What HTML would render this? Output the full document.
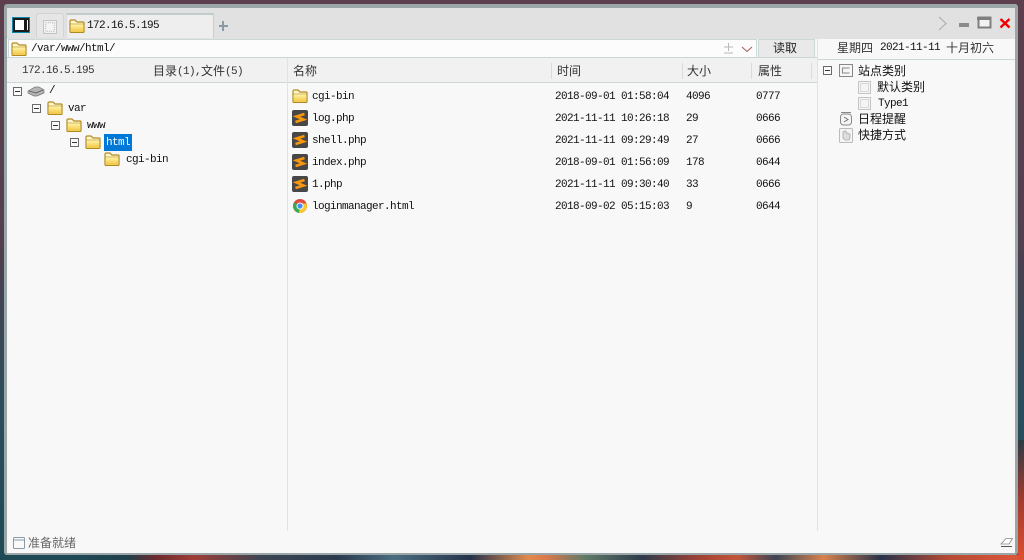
<!DOCTYPE html>
<html><head><meta charset="utf-8">
<style>
html,body{margin:0;padding:0}
body{width:1024px;height:560px;overflow:hidden;position:relative;background:#5d3e4c;font-family:"Liberation Mono","Noto Sans CJK SC",monospace;color:#111}
div,span,svg{position:absolute}
.t{font-size:11px;letter-spacing:-.6px;line-height:14px;white-space:nowrap;color:#111}
.c{font-size:12px;line-height:16px;white-space:nowrap;letter-spacing:0;font-family:"Noto Sans CJK SC","Liberation Sans",sans-serif;color:#333}
.sep{width:1px;background:#d8dcdc;top:63px;height:16px}
</style></head><body>
<svg width="1" height="1" style="left:0;top:0">
<defs>
<linearGradient id="fg" x1="0" y1="0" x2="0" y2="1"><stop offset="0" stop-color="#fff3a8"/><stop offset="1" stop-color="#f2c63e"/></linearGradient>
<symbol id="folder" viewBox="0 0 16 14"><path d="M1 12.500V2.500Q1 1 2.500 1H6L8 3H14Q15 3 15 4V12.500Q15 13.500 14 13.500H2Q1 13.500 1 12.500Z" fill="#fff6cc" stroke="#b08a20" stroke-width="1.200"/><path d="M1.800 5.500H14.200V12.800H1.800Z" fill="url(#fg)"/><path d="M1.500 5H14.500" stroke="#c9a73e" stroke-width=".8"/></symbol>
<symbol id="box" viewBox="0 0 9 9"><rect x=".5" y=".5" width="8" height="8" fill="#fafafa" stroke="#6a6a6a"/><path d="M2 4.500H7" stroke="#333"/></symbol>
<symbol id="sub" viewBox="0 0 16 16"><rect x="0" y="0" width="16" height="16" rx="2" fill="#474747"/><path d="M12.500 4L4.500 6.500L11.500 9.500L3.500 12" fill="none" stroke="#f7960f" stroke-width="2.600"/></symbol>
<symbol id="dash" viewBox="0 0 13 13"><rect x=".5" y=".5" width="12" height="12" fill="#f4f4f4" stroke="#c4c4c4"/><rect x="2.500" y="2.500" width="8" height="8" fill="none" stroke="#bcbcbc" stroke-dasharray="1 1"/></symbol>
</defs></svg>

<div style="left:0;top:0;width:1024px;height:300px;background:linear-gradient(#5d3e4c,#50404f)"></div>
<div style="left:0;top:250px;width:1024px;height:310px;background:linear-gradient(#4d3f4e,#2b4e5c 50%,#1f4a55)"></div>
<div style="left:70px;top:555px;width:954px;height:5px;background:linear-gradient(90deg,#1e4a55 0,#20404c 6%,#6d2a2e 9%,#a03c38 13%,#3c4653 20%,#2a3a4e 28%,#4b6c80 34%,#26334a 42%,#e08a4e 48%,#d9794a 50%,#5f7a68 54%,#2e3a4a 60%,#a24234 66%,#c2563a 70%,#3d4555 74%,#d9824c 79%,#28324a 85%,#b54a34 92%,#e0583a 100%)"></div>
<div style="left:1018px;top:440px;width:6px;height:120px;background:linear-gradient(#2e3a45,#a03c30 50%,#dd5030)"></div>

<!-- window -->
<div style="left:4px;top:4px;width:1014px;height:551px;background:#9aa5a8;border-radius:3px"></div>
<div style="left:7px;top:8px;width:1008px;height:545px;background:#f8f8f8"></div>
<div style="left:7px;top:8px;width:1008px;height:31px;background:#e1e1e1"></div>

<!-- sidebar button -->
<div style="left:12px;top:17px;width:18px;height:16px;background:#0a8aa8"></div>
<div style="left:13px;top:18px;width:16px;height:14px;background:#1b1b1b"></div>
<div style="left:15px;top:20px;width:9px;height:10px;background:#fff"></div>
<div style="left:27px;top:20px;width:1px;height:10px;background:#fff"></div>

<!-- inactive tab -->
<div style="left:36px;top:13px;width:26px;height:23px;background:#e6e6e6;border:1px solid #d0d4d4;border-bottom:0;border-radius:3px 3px 0 0"></div>
<svg style="left:43px;top:20px" width="14" height="14"><use href="#dash" width="14" height="14"/></svg>
<!-- active tab -->
<div style="left:66px;top:13px;width:146px;height:23px;background:#eeeeee;border-top:2px solid #c0cccc;border-right:1px solid #c8d0d0;border-left:1px solid #dcdcdc"></div>
<svg style="left:69px;top:19px" width="16" height="14"><use href="#folder" width="16" height="14"/></svg>
<div class="t" style="left:87px;top:19px">172.16.5.195</div>
<div style="left:219px;top:25px;width:9px;height:2px;background:#8a9aa4"></div>
<div style="left:222px;top:21px;width:2px;height:10px;background:#8a9aa4"></div>

<!-- window controls -->
<svg style="left:936px;top:15px" width="80" height="18">
<path d="M3 2L10 8.500L3 15" fill="none" stroke="#aaa"/>
<rect x="23" y="8" width="10" height="4" fill="#8c8c8c"/>
<rect x="42.500" y="2.500" width="12" height="10" fill="#f2f2f2" stroke="#7f7f7f" stroke-width="2"/>
<rect x="41" y="2" width="14" height="3" fill="#7f7f7f"/>
<path d="M64.500 4L73.500 12.500M73.500 4L64.500 12.500" stroke="#f00000" stroke-width="2.400"/>
</svg>

<!-- address -->
<div style="left:8px;top:39px;width:747px;height:17px;background:#fcfcfc;border:1px solid #cdd8d8"></div>
<svg style="left:11px;top:42px" width="16" height="14"><use href="#folder" width="16" height="14"/></svg>
<div class="t" style="left:31px;top:42px">/var/www/html/</div>
<svg style="left:722px;top:42px" width="32" height="14">
<path d="M2 5H11M6.500 1V9M2 11H11" stroke="#b8b8b8" fill="none"/>
<path d="M20 5L25 9.500L30 5" stroke="#a55" fill="none"/>
</svg>
<div style="left:758px;top:39px;width:55px;height:17px;background:#e9e9e9;border:1px solid #cdd8d8"></div>
<div class="c" style="left:773px;top:40px;color:#222">读取</div>
<div class="c" style="left:837px;top:40px">星期四</div>
<div class="t" style="left:880px;top:41px">2021-11-11</div>
<div class="c" style="left:946px;top:40px">十月初六</div>

<!-- dividers -->
<div style="left:817px;top:39px;width:1px;height:492px;background:#dfe3e3"></div>
<div style="left:818px;top:59px;width:197px;height:1px;background:#cdd6d6"></div>
<div style="left:7px;top:57px;width:810px;height:1px;background:#cdd6d6"></div>
<div style="left:7px;top:58px;width:810px;height:24px;background:#f1f1f1"></div>
<div style="left:7px;top:82px;width:810px;height:1px;background:#cfd6d6"></div>
<div style="left:287px;top:58px;width:1px;height:473px;background:#dfe3e3"></div>
<div class="sep" style="left:551px"></div>
<div class="sep" style="left:682px"></div>
<div class="sep" style="left:751px"></div>
<div class="sep" style="left:811px"></div>

<!-- left header -->
<div class="t" style="left:22px;top:64px;color:#333">172.16.5.195</div>
<div class="c" style="left:153px;top:63px">目录</div>
<div class="t" style="left:177px;top:65px;color:#333">(1),</div>
<div class="c" style="left:201px;top:63px">文件</div>
<div class="t" style="left:225px;top:65px;color:#333">(5)</div>

<!-- column headers -->
<div class="c" style="left:293px;top:63px">名称</div>
<div class="c" style="left:557px;top:63px">时间</div>
<div class="c" style="left:687px;top:63px">大小</div>
<div class="c" style="left:758px;top:63px">属性</div>

<!-- tree -->
<svg style="left:13px;top:87px" width="9" height="9"><use href="#box" width="9" height="9"/></svg>
<svg style="left:27px;top:85px" width="18" height="12"><path d="M1 6L8 2H12L17 5V8L10 11H7L1 8Z" fill="#b4b4b4" stroke="#777" stroke-width=".7"/><path d="M2 6L9 8L16 5" stroke="#555" fill="none" stroke-width=".8"/></svg>
<div class="t" style="left:49px;top:84px">/</div>
<svg style="left:32px;top:104px" width="9" height="9"><use href="#box" width="9" height="9"/></svg>
<svg style="left:47px;top:101px" width="16" height="14"><use href="#folder" width="16" height="14"/></svg>
<div class="t" style="left:68px;top:102px">var</div>
<svg style="left:51px;top:121px" width="9" height="9"><use href="#box" width="9" height="9"/></svg>
<svg style="left:66px;top:118px" width="16" height="14"><use href="#folder" width="16" height="14"/></svg>
<div class="t" style="left:87px;top:119px">www</div>
<svg style="left:70px;top:138px" width="9" height="9"><use href="#box" width="9" height="9"/></svg>
<svg style="left:85px;top:135px" width="16" height="14"><use href="#folder" width="16" height="14"/></svg>
<div style="left:104px;top:134px;width:28px;height:17px;background:#0078d7"></div>
<div class="t" style="left:106px;top:136px;color:#fff">html</div>
<svg style="left:104px;top:152px" width="16" height="14"><use href="#folder" width="16" height="14"/></svg>
<div class="t" style="left:126px;top:153px">cgi-bin</div>

<!-- files -->
<svg style="left:292px;top:89px" width="16" height="14"><use href="#folder" width="16" height="14"/></svg>
<div class="t" style="left:312px;top:90px">cgi-bin</div>
<div class="t" style="left:555px;top:90px">2018-09-01 01:58:04</div>
<div class="t" style="left:686px;top:90px">4096</div>
<div class="t" style="left:756px;top:90px">0777</div>

<svg style="left:292px;top:110px" width="16" height="16"><use href="#sub" width="16" height="16"/></svg>
<div class="t" style="left:312px;top:112px">log.php</div>
<div class="t" style="left:555px;top:112px">2021-11-11 10:26:18</div>
<div class="t" style="left:686px;top:112px">29</div>
<div class="t" style="left:756px;top:112px">0666</div>

<svg style="left:292px;top:132px" width="16" height="16"><use href="#sub" width="16" height="16"/></svg>
<div class="t" style="left:312px;top:134px">shell.php</div>
<div class="t" style="left:555px;top:134px">2021-11-11 09:29:49</div>
<div class="t" style="left:686px;top:134px">27</div>
<div class="t" style="left:756px;top:134px">0666</div>

<svg style="left:292px;top:154px" width="16" height="16"><use href="#sub" width="16" height="16"/></svg>
<div class="t" style="left:312px;top:156px">index.php</div>
<div class="t" style="left:555px;top:156px">2018-09-01 01:56:09</div>
<div class="t" style="left:686px;top:156px">178</div>
<div class="t" style="left:756px;top:156px">0644</div>

<svg style="left:292px;top:176px" width="16" height="16"><use href="#sub" width="16" height="16"/></svg>
<div class="t" style="left:312px;top:178px">1.php</div>
<div class="t" style="left:555px;top:178px">2021-11-11 09:30:40</div>
<div class="t" style="left:686px;top:178px">33</div>
<div class="t" style="left:756px;top:178px">0666</div>

<svg style="left:293px;top:199px" width="14" height="14" viewBox="0 0 14 14">
<circle cx="7" cy="7" r="7" fill="#e04a3a"/>
<path d="M7 7L1 3.500A7 7 0 0 0 6 13.930Z" fill="#3ca852"/>
<path d="M7 7L6 13.930A7 7 0 0 0 13.500 4.500L7 4.500Z" fill="#f8c92e"/>
<circle cx="7" cy="7" r="3.500" fill="#fff"/><circle cx="7" cy="7" r="2.600" fill="#4a8cf0"/>
</svg>
<div class="t" style="left:312px;top:200px">loginmanager.html</div>
<div class="t" style="left:555px;top:200px">2018-09-02 05:15:03</div>
<div class="t" style="left:686px;top:200px">9</div>
<div class="t" style="left:756px;top:200px">0644</div>

<!-- right panel -->
<svg style="left:823px;top:66px" width="9" height="9"><use href="#box" width="9" height="9"/></svg>
<svg style="left:839px;top:64px" width="14" height="14"><rect x=".5" y=".5" width="13" height="12" fill="#f6f6f6" stroke="#888"/><path d="M10.500 4H3.500V9H10.500" fill="none" stroke="#888"/></svg>
<div class="c" style="left:858px;top:63px;color:#111">站点类别</div>
<svg style="left:858px;top:81px" width="13" height="13"><use href="#dash" width="13" height="13"/></svg>
<div class="c" style="left:877px;top:79px;color:#111">默认类别</div>
<svg style="left:858px;top:97px" width="13" height="13"><use href="#dash" width="13" height="13"/></svg>
<div class="t" style="left:878px;top:97px">Type1</div>
<svg style="left:839px;top:112px" width="14" height="14"><path d="M2 .5H12" stroke="#888"/><rect x="1.500" y="2" width="11" height="11" rx="3" fill="#f6f6f6" stroke="#888"/><path d="M5 5L9 7.500L5 10" fill="none" stroke="#777"/></svg>
<div class="c" style="left:858px;top:111px;color:#111">日程提醒</div>
<svg style="left:839px;top:128px" width="14" height="15"><rect x=".5" y=".5" width="13" height="14" rx="1" fill="#f4f4f4" stroke="#bbb"/><path d="M4 4V10L6 12H10L11 9V6H9V5H7V3H5Z" fill="#ddd" stroke="#aaa" stroke-width=".8"/></svg>
<div class="c" style="left:858px;top:127px;color:#111">快捷方式</div>

<!-- status -->
<svg style="left:13px;top:537px" width="12" height="12"><rect x=".5" y=".5" width="11" height="11" rx="1" fill="#fafafa" stroke="#8a9aa8"/><path d="M1 3H11" stroke="#8a9aa8"/></svg>
<div class="c" style="left:28px;top:535px;color:#666">准备就绪</div>
<svg style="left:1000px;top:537px" width="14" height="11"><path d="M1 7L6 1.500H12.500L9 7Z" fill="#fff" stroke="#888" stroke-width=".8"/><path d="M1 9.500H12" stroke="#555"/></svg>
</body></html>
